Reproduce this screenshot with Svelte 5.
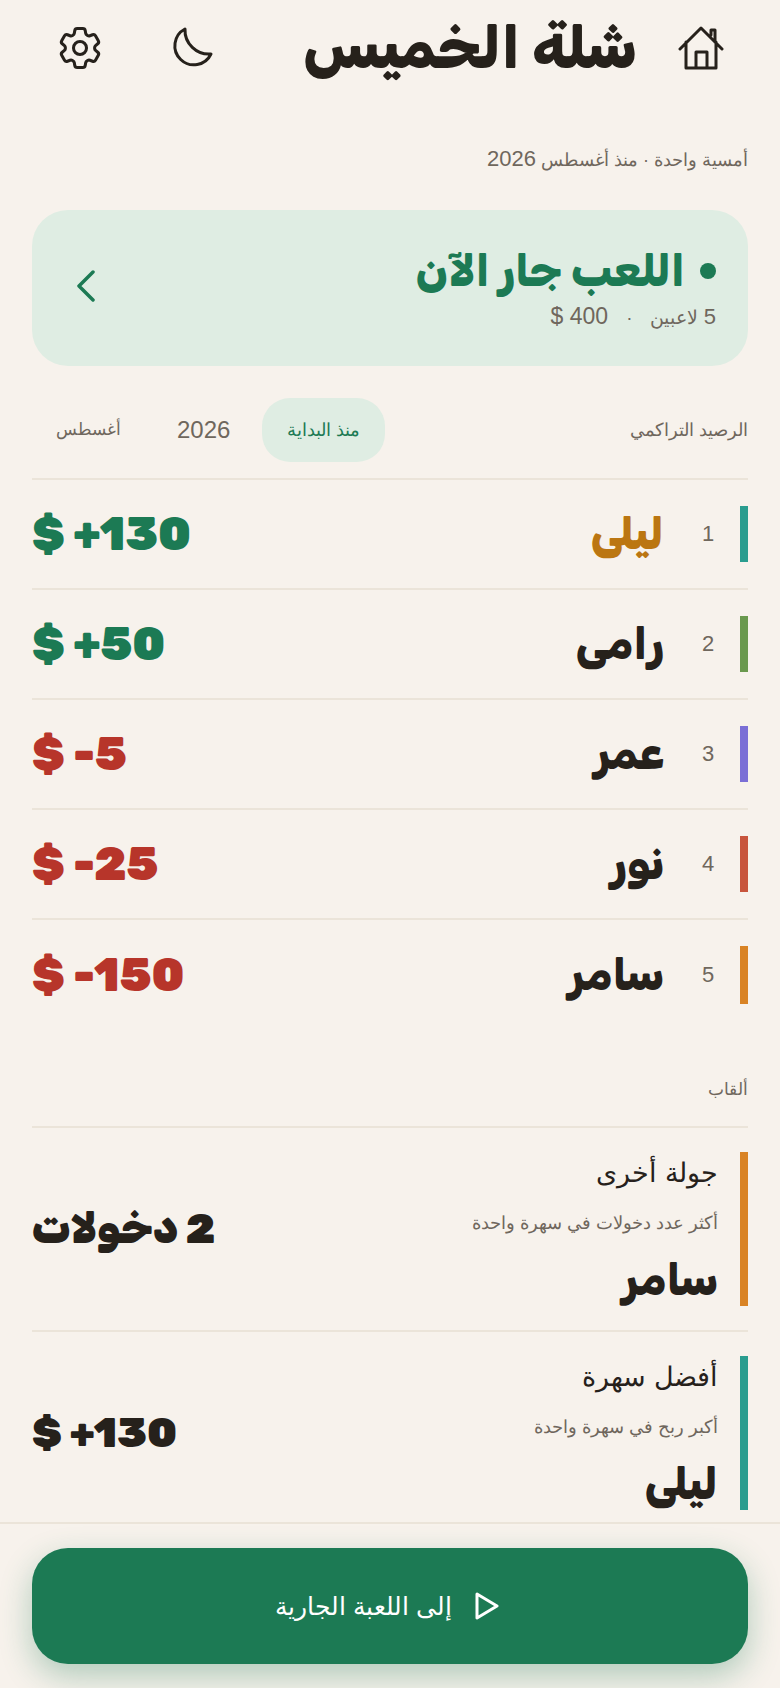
<script>
  const players = [
    { rank: 1, name: 'ليلى', money: '$ +130', bar: '#2a9d8f', state: 'up', lead: true },
    { rank: 2, name: 'رامى', money: '$ +50', bar: '#6a994e', state: 'up' },
    { rank: 3, name: 'عمر', money: '$ -5', bar: '#7b6fd6', state: 'down' },
    { rank: 4, name: 'نور', money: '$ -25', bar: '#c8553d', state: 'down' },
    { rank: 5, name: 'سامر', money: '$ -150', bar: '#d98324', state: 'down' }
  ];
  const titles = [
    { title: 'جولة أخرى', desc: 'أكثر عدد دخولات في سهرة واحدة', who: 'سامر', value: '2 دخولات', bar: '#d98324' },
    { title: 'أفضل سهرة', desc: 'أكبر ربح في سهرة واحدة', who: 'ليلى', value: '$ +130', bar: '#2a9d8f', ltr: true }
  ];
</script>

<div class="page" dir="rtl">
  <header>
    <svg class="home" viewBox="0 0 46 44" width="46" height="44"><path d="M2 23 23 2l21 21M8 16v26h30V16M18 42V26h11v16M33 9V4h4v12" /></svg>
    <h1>شلة الخميس</h1>
    <div class="tools">
      <svg viewBox="0 0 44 44" width="44" height="44"><path d="M15 3A19 19 0 1 0 41 28 24 24 0 0 1 15 3z" /></svg>
      <svg class="gear" viewBox="0 0 24 24" width="52" height="52"><path d="M9.594 3.94c.09-.542.56-.94 1.11-.94h2.593c.55 0 1.02.398 1.11.94l.213 1.281c.063.374.313.686.645.87.074.04.147.083.22.127.325.196.72.257 1.075.124l1.217-.456a1.125 1.125 0 0 1 1.37.49l1.296 2.247a1.125 1.125 0 0 1-.26 1.431l-1.003.827c-.293.241-.438.613-.43.992a7.723 7.723 0 0 1 0 .255c-.008.378.137.75.43.991l1.004.827c.424.35.534.955.26 1.43l-1.298 2.247a1.125 1.125 0 0 1-1.369.491l-1.217-.456c-.355-.133-.75-.072-1.076.124a6.47 6.47 0 0 1-.22.128c-.331.183-.581.495-.644.869l-.213 1.281c-.09.543-.56.94-1.11.94h-2.594c-.55 0-1.019-.398-1.11-.94l-.213-1.281c-.062-.374-.312-.686-.644-.87a6.52 6.52 0 0 1-.22-.127c-.325-.196-.72-.257-1.076-.124l-1.217.456a1.125 1.125 0 0 1-1.369-.49l-1.297-2.247a1.125 1.125 0 0 1 .26-1.431l1.004-.827c.292-.24.437-.613.43-.991a6.932 6.932 0 0 1 0-.255c.007-.38-.138-.751-.43-.992l-1.004-.827a1.125 1.125 0 0 1-.26-1.43l1.297-2.247a1.125 1.125 0 0 1 1.37-.491l1.216.456c.356.133.751.072 1.076-.124.072-.044.146-.086.22-.128.332-.183.582-.495.644-.869l.214-1.28z" /><circle cx="12" cy="12" r="3" /></svg>
    </div>
  </header>

  <p class="sub">أمسية واحدة · منذ أغسطس <span class="num">2026</span></p>

  <section class="hero">
    <div>
      <h2><span class="live"></span>اللعب جار الآن</h2>
      <p><span class="num">5</span> لاعبين<span class="dot">·</span><span class="num pot">400 $</span></p>
    </div>
    <svg class="back" viewBox="0 0 20 32" width="20" height="32"><path d="M17 2 3 16l14 14" /></svg>
  </section>

  <div class="filter">
    <span class="label">الرصيد التراكمي</span>
    <div class="tabs">
      <span class="tab on">منذ البداية</span>
      <span class="tab big">2026</span>
      <span class="tab small">أغسطس</span>
    </div>
  </div>

  <ul class="board">
    {#each players as p}
      <li>
        <i style:background={p.bar}></i>
        <span class="rank">{p.rank}</span>
        <span class="name" class:lead={p.lead}>{p.name}</span>
        <bdi class="money {p.state}" dir="ltr">{p.money}</bdi>
      </li>
    {/each}
  </ul>

  <h3>ألقاب</h3>
  <ul class="titles">
    {#each titles as t}
      <li>
        <i style:background={t.bar}></i>
        <div class="info">
          <span class="t">{t.title}</span>
          <span class="d">{t.desc}</span>
          <span class="w">{t.who}</span>
        </div>
        <bdi class="v" dir={t.ltr ? 'ltr' : 'rtl'}>{t.value}</bdi>
      </li>
    {/each}
  </ul>

  <footer>
    <button>
      <svg viewBox="0 0 26 28" width="26" height="28"><path d="M3 2 23 14 3 26z" /></svg>
      إلى اللعبة الجارية
    </button>
  </footer>
</div>

<style>
  :global(body) {
    margin: 0;
    background: #f7f2ec;
    color: #26211b;
    font-family: "Liberation Sans", Arial, sans-serif;
  }

  .page {
    height: 1688px;
    overflow: hidden;
    position: relative;
    padding: 0 32px;
    box-sizing: border-box;
  }

  svg {
    fill: none;
    stroke: currentColor;
    stroke-width: 3;
    stroke-linecap: round;
    stroke-linejoin: round;
    flex: none;
  }

  .gear {
    stroke-width: 1.4;
  }

  .back {
    stroke-width: 3.5;
  }

  .num {
    font-size: 22px;
    line-height: 1;
  }

  header {
    display: flex;
    align-items: center;
    height: 96px;
    padding: 0 24px 0 22px;
    gap: 41px;
  }

  h1 {
    margin: 0;
    flex: 1;
    font-family: Rubik, sans-serif;
    font-size: 59px;
    font-weight: 800;
    white-space: nowrap;
  }

  .tools {
    display: flex;
    align-items: center;
    gap: 64px;
  }

  .sub {
    margin: 50px 0 0;
    font-size: 18px;
    line-height: 28px;
    height: 28px;
    color: #6f675d;
  }

  .hero {
    margin-top: 36px;
    height: 156px;
    box-sizing: border-box;
    padding: 0 32px 4px 44px;
    border-radius: 36px;
    background: #dfede3;
    display: flex;
    align-items: center;
    justify-content: space-between;
    color: #1c7a54;
  }

  h2 {
    margin: 0;
    display: flex;
    align-items: center;
    gap: 15px;
    font-family: Rubik, sans-serif;
    font-size: 44px;
    font-weight: 800;
    line-height: 56px;
  }

  .live {
    width: 16px;
    height: 16px;
    border-radius: 50%;
    background: #1c7a54;
  }

  .hero p {
    margin: 6px 0 0;
    font-size: 19px;
    color: #6f675d;
  }

  .dot {
    margin: 0 18px;
  }

  .pot {
    font-size: 23px;
    letter-spacing: 4px;
  }

  .filter {
    margin-top: 32px;
    display: flex;
    align-items: center;
    justify-content: space-between;
    height: 64px;
    font-size: 18px;
    color: #6f675d;
  }

  .tabs {
    display: flex;
    gap: 8px;
  }

  .tab {
    padding: 0 24px;
    line-height: 64px;
    border-radius: 28px;
  }

  .big {
    font-size: 24px;
  }

  .small {
    font-size: 17px;
  }

  .on {
    padding: 0 25px;
    background: #dfede3;
    color: #1c7a54;
  }

  ul {
    list-style: none;
    margin: 0;
    padding: 0;
  }

  .board {
    margin-top: 16px;
    border-top: 2px solid #ebe4d9;
  }

  .board li {
    height: 110px;
    box-sizing: border-box;
    border-bottom: 2px solid #ebe4d9;
    display: flex;
    align-items: center;
  }

  .board li:last-child {
    border-bottom: 0;
  }

  li i {
    width: 8px;
    align-self: stretch;
    flex: none;
  }

  .board i {
    margin: 26px 0;
  }

  .rank {
    width: 28px;
    margin: 0 18px 0 30px;
    text-align: center;
    font-size: 22px;
    color: #6f675d;
  }

  .name {
    flex: 1;
    font-family: Rubik, sans-serif;
    font-size: 44px;
    font-weight: 800;
  }

  .lead {
    color: #bb7611;
  }

  .money {
    font-family: Rubik, sans-serif;
    font-size: 46px;
    font-weight: 900;
  }

  .up {
    color: #1c7a54;
  }

  .down {
    color: #b7352a;
  }

  h3 {
    margin: 46px 0 0;
    font-size: 17px;
    font-weight: 400;
    line-height: 28px;
    color: #6f675d;
  }

  .titles {
    margin-top: 22px;
    border-top: 2px solid #ebe4d9;
  }

  .titles li {
    height: 204px;
    box-sizing: border-box;
    padding: 24px 0;
    border-bottom: 2px solid #ebe4d9;
    display: flex;
    align-items: center;
  }

  .info {
    flex: 1;
    align-self: stretch;
    display: flex;
    flex-direction: column;
    padding: 1px 22px 0 0;
  }

  .t {
    font-size: 27px;
    line-height: 40px;
  }

  .d {
    margin-top: 18px;
    font-size: 18px;
    line-height: 24px;
    color: #6f675d;
  }

  .w {
    margin-top: 13px;
    font-family: Rubik, sans-serif;
    font-size: 44px;
    font-weight: 800;
    line-height: 64px;
  }

  .v {
    font-family: Rubik, sans-serif;
    font-size: 42px;
    font-weight: 900;
  }

  footer {
    position: absolute;
    left: 0;
    right: 0;
    bottom: 0;
    height: 166px;
    box-sizing: border-box;
    padding: 24px 32px;
    background: #f7f2ec;
    border-top: 2px solid #ebe4d9;
  }

  button {
    width: 100%;
    height: 116px;
    padding: 0 5px 0 0;
    border: 0;
    border-radius: 36px;
    background: #1c7a54;
    color: #fff;
    font: 25px "Liberation Sans", Arial, sans-serif;
    display: flex;
    align-items: center;
    justify-content: center;
    gap: 22px;
    box-shadow: 0 12px 32px rgba(28, 122, 84, 0.32);
  }
</style>
